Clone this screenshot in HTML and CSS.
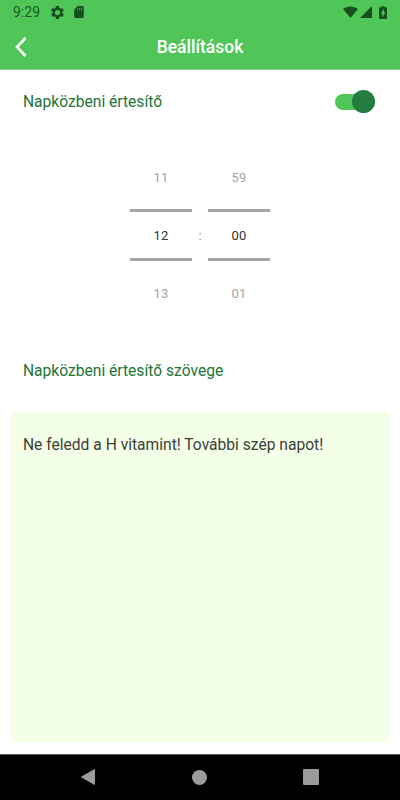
FILE: index.html
```html
<!DOCTYPE html>
<html lang="hu">

<head>
    <meta charset="UTF-8">
    <meta name="viewport" content="width=device-width, initial-scale=1.0">
    <title>Beállítások</title>
    <link rel="stylesheet" href="styles.css">
</head>

<body>
    <div class="statusbar">
        <span class="clock">9:29</span>
        <svg class="gear" viewBox="2 2 20 20" width="13" height="13">
            <path fill-rule="evenodd" d="M19.4 13a7.500 7.500 0 0 0 0-2l2.100-1.600a.5.5 0 0 0 .1-.6l-2-3.500a.5.5 0 0 0-.6-.2l-2.500 1a7.300 7.300 0 0 0-1.700-1l-.4-2.700a.5.5 0 0 0-.5-.4h-4a.5.5 0 0 0-.5.4L9 5.100a7.300 7.300 0 0 0-1.700 1l-2.500-1a.5.5 0 0 0-.6.200l-2 3.500a.5.5 0 0 0 .1.600L4.500 11a7.500 7.500 0 0 0 0 2l-2.100 1.600a.5.5 0 0 0-.1.600l2 3.500c.1.200.4.300.6.200l2.500-1c.5.400 1.100.7 1.700 1l.4 2.700c0 .2.200.4.500.4h4c.2 0 .5-.2.500-.4l.4-2.700c.6-.3 1.200-.6 1.700-1l2.500 1c.2.100.5 0 .6-.2l2-3.500a.5.5 0 0 0-.1-.6L19.400 13zM12 16a4 4 0 1 1 0-8 4 4 0 0 1 0 8z" />
        </svg>
        <svg class="card" viewBox="4 2 16 20" width="10" height="12">
            <path fill-rule="evenodd" d="M18 2h-8L4 8v12c0 1.100.9 2 2 2h12c1.100 0 2-.9 2-2V4c0-1.100-.9-2-2-2zM8.500 5.500h1.200V9H8.500zM12 5.500h1.200V9H12zM15.500 5.500h1.200V9h-1.200z" />
        </svg>
        <div class="signals">
            <svg viewBox="0 0 15 12" width="15" height="12">
                <path d="M0 3C4.500-.5 10.500-.5 15 3L7.500 12z" />
            </svg>
            <svg viewBox="0 0 12 12" width="12" height="12">
                <path d="M0 12L12 0v12z" />
            </svg>
            <svg class="battery" viewBox="0 0 8 13" width="8" height="13">
                <path fill-rule="evenodd" d="M2.500 0h3v1.200H7q1 0 1 1V12q0 1-1 1H1q-1 0-1-1V2.200q0-1 1-1h1.500zM5 2.800L1.800 7.700h1.600v3.700L6.400 6.200H5z" />
            </svg>
        </div>
    </div>
    <div class="header">
        <svg class="back" viewBox="0 0 12 20" width="12" height="20">
            <path d="M10.500 1L2 10l8.500 9" />
        </svg>
        <h1 class="title">Beállítások</h1>
    </div>
    <div class="main">
        <div class="row">
            <p class="label">Napközbeni értesítő</p>
            <div class="switch">
                <div class="thumb"></div>
            </div>
        </div>
        <div class="picker">
            <div class="column">
                <span class="number">11</span>
                <span class="number selected">12</span>
                <span class="number">13</span>
            </div>
            <span class="colon">:</span>
            <div class="column">
                <span class="number">59</span>
                <span class="number selected">00</span>
                <span class="number">01</span>
            </div>
        </div>
        <p class="label text-label">Napközbeni értesítő szövege</p>
        <div class="message">Ne feledd a H vitamint! További szép napot!</div>
    </div>
    <div class="navbar">
        <svg viewBox="0 0 14 16" width="14" height="16">
            <path d="M13.200.3q.8-.3.800.5v14.400q0 .8-.8.500L.5 8.500q-.8-.5 0-1z" />
        </svg>
        <div class="home"></div>
        <div class="recent"></div>
    </div>
</body>

</html>
```
FILE: styles.css
```css
* {
    margin: 0;
    padding: 0;
    box-sizing: border-box;
}
body {
    width: 400px;
    height: 800px;
    display: flex;
    flex-direction: column;
    background-color: white;
    font-family: Roboto, "Liberation Sans", sans-serif;
    overflow: hidden;
}
svg {
    display: block;
}
.statusbar {
    height: 24px;
    padding: 0 13px;
    display: flex;
    align-items: center;
    background-color: #50c659;
    color: #1c5b24;
    fill: #174f1e;
}
.clock {
    width: 38px;
    font-size: 14px;
}
.card {
    margin-left: 10px;
}
.signals {
    display: flex;
    align-items: center;
    margin-left: auto;
    gap: 2px;
}
.battery {
    margin-left: 5px;
}
.header {
    height: 46px;
    padding: 0 15px;
    display: flex;
    align-items: center;
    background-color: #50c659;
    border-bottom: 1px solid #8bd891;
}
.back {
    fill: none;
    stroke: white;
    stroke-width: 2.6;
}
.title {
    flex: 1;
    margin-right: 12px;
    text-align: center;
    color: white;
    font-size: 17.5px;
    font-weight: 500;
}
.main {
    flex: 1;
    display: flex;
    flex-direction: column;
    padding: 0 11px 12px;
}
.row {
    height: 63px;
    padding: 0 14px 0 12px;
    display: flex;
    align-items: center;
    justify-content: space-between;
}
.label {
    color: #1c7436;
    font-size: 15.6px;
}
.switch {
    width: 40px;
    height: 16px;
    border-radius: 8px;
    background-color: #50c659;
    display: flex;
    align-items: center;
    justify-content: flex-end;
}
.thumb {
    width: 23px;
    height: 23px;
    flex: none;
    border-radius: 50%;
    background-color: #237d42;
}
.picker {
    margin-top: 13px;
    display: flex;
    align-items: center;
    justify-content: center;
}
.column {
    width: 62px;
    display: flex;
    flex-direction: column;
}
.number {
    height: 62px;
    display: flex;
    align-items: center;
    justify-content: center;
    color: #a5a5a5;
    font-size: 13px;
    letter-spacing: 0.3px;
}
.selected {
    height: 52px;
    margin: 1px 0;
    border-top: 3px solid #a4a4a4;
    border-bottom: 3px solid #a4a4a4;
    color: #333;
}
.colon {
    width: 16px;
    text-align: center;
    color: #999;
    font-size: 13px;
}
.text-label {
    margin: 38px 0 0 12px;
    line-height: 18px;
}
.message {
    flex: 1;
    margin-top: 32px;
    padding: 24px 12px;
    background-color: #f4ffe8;
    color: #3d403a;
    font-size: 15.6px;
    line-height: 18px;
}
.navbar {
    height: 46px;
    padding: 0 81px 1px;
    display: flex;
    align-items: center;
    justify-content: space-between;
    background-color: black;
    border-top: 1px solid #555;
    fill: #9c9c9c;
}
.home {
    width: 15px;
    height: 15px;
    margin-left: 1px;
    border-radius: 50%;
    background-color: #9c9c9c;
}
.recent {
    width: 16px;
    height: 16px;
    border-radius: 1px;
    background-color: #9c9c9c;
}
```
